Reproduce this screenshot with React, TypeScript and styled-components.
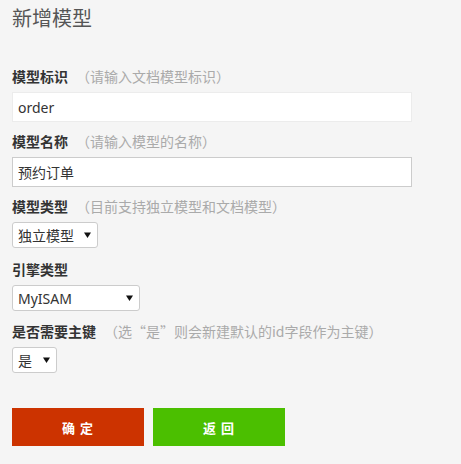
import React from 'react';
import styled, { createGlobalStyle } from 'styled-components';

const GlobalStyle = createGlobalStyle`
  html, body {
    margin: 0;
    padding: 0;
    background: #f5f5f5;
  }
  body {
    font-family: "Noto Sans CJK SC", "Noto Sans", sans-serif;
    color: #333;
  }
`;

const Page = styled.div`
  padding: 4px 12px 0;
`;

const Title = styled.h2`
  margin: 0 0 34px;
  font-size: 20px;
  line-height: 28px;
  font-weight: normal;
  color: #555;
`;

const Field = styled.div<{ $gap: number }>`
  margin-bottom: ${(p) => p.$gap}px;
`;

const Label = styled.div`
  height: 20px;
  line-height: 20px;
  margin-bottom: 6px;
  font-size: 14px;
  font-weight: bold;
  color: #333;
  white-space: nowrap;
`;

const Hint = styled.span`
  margin-left: 8px;
  font-weight: normal;
  color: #aaa;
`;

const Quote = styled.span`
  font-feature-settings: "fwid";
`;

const TextInput = styled.input<{ $soft?: boolean }>`
  display: block;
  box-sizing: border-box;
  width: 400px;
  height: 30px;
  padding: 0 5px;
  border: 1px solid ${(p) => (p.$soft ? '#ececec' : '#ccc')};
  background: #fff;
  font-family: "Noto Sans", "Noto Sans CJK SC", sans-serif;
  font-size: 14px;
  color: #333;
  outline: none;
`;

const SelectBox = styled.div<{ $width: number }>`
  display: flex;
  align-items: center;
  box-sizing: border-box;
  width: ${(p) => p.$width}px;
  height: 26px;
  border: 1px solid #ccc;
  border-radius: 3px;
  background: #fff;
`;

const SelectField = styled.select`
  flex: 1;
  min-width: 0;
  height: 100%;
  padding: 0 0 0 5px;
  border: none;
  background: transparent;
  appearance: none;
  font-family: "Noto Sans", "Noto Sans CJK SC", sans-serif;
  font-size: 14px;
  color: #333;
  outline: none;
`;

const Arrow = styled.svg`
  flex: none;
  margin: 0 6px 0 4px;
`;

const Actions = styled.div`
  display: flex;
  gap: 9px;
  margin-top: 35px;
`;

const Button = styled.button<{ $color: string }>`
  width: 132px;
  height: 38px;
  border: none;
  background: ${(p) => p.$color};
  color: #fff;
  font-family: "Noto Sans CJK SC", sans-serif;
  font-size: 13px;
  font-weight: bold;
  letter-spacing: 1px;
  cursor: pointer;
`;

type Option = { value: string; label: string };

function Select({ width, options }: { width: number; options: Option[] }) {
  return (
    <SelectBox $width={width}>
      <SelectField defaultValue={options[0].value}>
        {options.map((o) => (
          <option key={o.value} value={o.value}>
            {o.label}
          </option>
        ))}
      </SelectField>
      <Arrow width="7" height="6" viewBox="0 0 7 6">
        <path d="M0 0.5 H7 L3.5 6 Z" fill="#111" />
      </Arrow>
    </SelectBox>
  );
}

export default function App() {
  return (
    <Page>
      <GlobalStyle />
      <Title>新增模型</Title>

      <Field $gap={9}>
        <Label>
          模型标识<Hint>（请输入文档模型标识）</Hint>
        </Label>
        <TextInput $soft defaultValue="order" />
      </Field>

      <Field $gap={9}>
        <Label>
          模型名称<Hint>（请输入模型的名称）</Hint>
        </Label>
        <TextInput defaultValue="预约订单" />
      </Field>

      <Field $gap={11}>
        <Label>
          模型类型<Hint>（目前支持独立模型和文档模型）</Hint>
        </Label>
        <Select
          width={86}
          options={[
            { value: '1', label: '独立模型' },
            { value: '2', label: '文档模型' },
          ]}
        />
      </Field>

      <Field $gap={10}>
        <Label>引擎类型</Label>
        <Select
          width={128}
          options={[
            { value: 'MyISAM', label: 'MyISAM' },
            { value: 'InnoDB', label: 'InnoDB' },
          ]}
        />
      </Field>

      <Field $gap={0}>
        <Label>
          是否需要主键
          <Hint>
            （选<Quote>“</Quote>是<Quote>”</Quote>则会新建默认的id字段作为主键）
          </Hint>
        </Label>
        <Select
          width={45}
          options={[
            { value: '1', label: '是' },
            { value: '0', label: '否' },
          ]}
        />
      </Field>

      <Actions>
        <Button $color="#cc3300">确 定</Button>
        <Button $color="#4bbf00">返 回</Button>
      </Actions>
    </Page>
  );
}
